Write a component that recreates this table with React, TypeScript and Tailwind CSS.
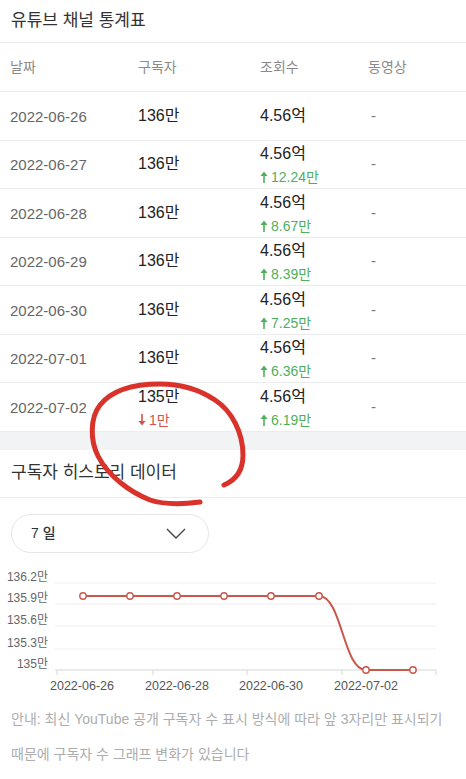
import React from 'react';

type Row = {
  date: string;
  subs: string;
  subsDelta?: string;
  views: string;
  viewsDelta?: string;
};

const rows: Row[] = [
  { date: '2022-06-26', subs: '136만', views: '4.56억' },
  { date: '2022-06-27', subs: '136만', views: '4.56억', viewsDelta: '12.24만' },
  { date: '2022-06-28', subs: '136만', views: '4.56억', viewsDelta: '8.67만' },
  { date: '2022-06-29', subs: '136만', views: '4.56억', viewsDelta: '8.39만' },
  { date: '2022-06-30', subs: '136만', views: '4.56억', viewsDelta: '7.25만' },
  { date: '2022-07-01', subs: '136만', views: '4.56억', viewsDelta: '6.36만' },
  { date: '2022-07-02', subs: '135만', subsDelta: '1만', views: '4.56억', viewsDelta: '6.19만' },
];

function Arrow({ up, color }: { up: boolean; color: string }) {
  return (
    <svg width="8" height="12" viewBox="0 0 8 12" className="mr-[3px]">
      {up ? (
        <>
          <polygon points="0.5,5 4,0.5 7.5,5" fill={color} />
          <rect x="3.2" y="4" width="1.6" height="8" fill={color} />
        </>
      ) : (
        <>
          <polygon points="0.5,7 4,11.5 7.5,7" fill={color} />
          <rect x="3.2" y="0" width="1.6" height="8" fill={color} />
        </>
      )}
    </svg>
  );
}

function Delta({ up, value }: { up: boolean; value: string }) {
  const color = up ? '#4fb05c' : '#d4544a';
  return (
    <div className={`flex items-center mt-[6px] text-[14px] leading-[14px] ${up ? 'text-[#4fb05c]' : 'text-[#d4544a]'}`}>
      <Arrow up={up} color={color} />
      {value}
    </div>
  );
}

const yLabels = [
  { t: '136.2만', y: 23 },
  { t: '135.9만', y: 44 },
  { t: '135.6만', y: 66 },
  { t: '135.3만', y: 89 },
  { t: '135만', y: 110 },
];

const points = [
  [83, 36], [130, 36], [177, 36], [224, 36], [271, 36], [319, 36], [366, 110], [413, 110],
];

function Chart() {
  const line = '#c9574b';
  return (
    <svg width="466" height="137" viewBox="0 0 466 137" className="block mt-[7px]">
      {yLabels.map((l, i) => (
        <g key={l.t}>
          <line x1="55" x2="436" y1={l.y} y2={l.y} stroke={i === 4 ? '#d6d6d6' : '#eeeeee'} strokeWidth="1" />
          <text x="48" y={l.y - 2.5} textAnchor="end" fontSize="12" fill="#666">
            {l.t}
          </text>
        </g>
      ))}
      {[57, 153, 247, 342, 436].map((x) => (
        <line key={x} x1={x} x2={x} y1="110" y2="115" stroke="#d6d6d6" strokeWidth="1" />
      ))}
      {[
        { t: '2022-06-26', x: 82 },
        { t: '2022-06-28', x: 177 },
        { t: '2022-06-30', x: 271 },
        { t: '2022-07-02', x: 366 },
      ].map((l) => (
        <text key={l.t} x={l.x} y="130" textAnchor="middle" fontSize="12.5" fill="#555">
          {l.t}
        </text>
      ))}
      <path
        d="M83 36 L319 36 C342 36 343 110 366 110 L413 110"
        fill="none"
        stroke={line}
        strokeWidth="2"
      />
      {points.map(([x, y]) => (
        <circle key={x} cx={x} cy={y} r="3.2" fill="#fff" stroke={line} strokeWidth="1.4" />
      ))}
    </svg>
  );
}

export default function App() {
  return (
    <div className="relative w-[466px] h-[779px] overflow-hidden bg-white font-[Liberation_Sans,Noto_Sans_CJK_KR,sans-serif]">
      {/* channel stats table */}
      <div className="h-[43px] flex items-center pl-[11px] border-b border-[#ececec] text-[17px] text-[#333]">
        유튜브 채널 통계표
      </div>
      <div className="h-[49px] grid grid-cols-[128px_122px_108px_1fr] items-center pl-[10px] border-b border-[#ececec] text-[14px] text-[#8a8a8a]">
        <div>날짜</div>
        <div>구독자</div>
        <div>조회수</div>
        <div>동영상</div>
      </div>
      {rows.map((r) => (
        <div
          key={r.date}
          className="h-[48.5px] grid grid-cols-[128px_122px_108px_1fr] items-center pl-[10px] border-b border-[#ececec]"
        >
          <div className="text-[15px] text-[#666] pt-[2px]">{r.date}</div>
          <div className="flex flex-col">
            <div className="text-[16px] leading-[20px] text-[#222]">{r.subs}</div>
            {r.subsDelta && <Delta up={false} value={r.subsDelta} />}
          </div>
          <div className="flex flex-col">
            <div className="text-[16px] leading-[20px] text-[#222]">{r.views}</div>
            {r.viewsDelta && <Delta up value={r.viewsDelta} />}
          </div>
          <div className="text-[15px] text-[#777] pl-[3px]">-</div>
        </div>
      ))}
      <div className="h-[18px] bg-[#f2f3f5]" />

      {/* subscriber history */}
      <div className="h-[48px] flex items-center pl-[11px] border-b border-[#ececec] text-[17px] text-[#333]">
        구독자 히스토리 데이터
      </div>
      <div className="px-[11px] pt-[16px]">
        <div className="w-[198px] h-[39px] rounded-full border border-[#e6e6e6] flex items-center justify-between pl-[19px] pr-[22px]">
          <span className="text-[14px] font-medium text-[#333]">7 일</span>
          <svg width="20" height="11" viewBox="0 0 20 11">
            <polyline points="1,1 10,10 19,1" fill="none" stroke="#444" strokeWidth="1.4" />
          </svg>
        </div>
      </div>
      <Chart />
      <div className="mt-[5px] pl-[11px] text-[14px] leading-[35px] text-[#adadad]">
        안내: 최신 YouTube 공개 구독자 수 표시 방식에 따라 앞 3자리만 표시되기
        <br />
        때문에 구독자 수 그래프 변화가 있습니다
      </div>

      {/* hand drawn red circle */}
      <svg
        width="466"
        height="779"
        viewBox="0 0 466 779"
        className="absolute inset-0 pointer-events-none"
      >
        <path
          d="M224 485 C236 480 243 470 243 455 C243 433 232 411 215 400 C200 390 180 384 160 384 C135 384 112 390 100 405 C90 418 90 440 98 456 C108 476 130 492 150 500 C165 505 185 504 200 502"
          fill="none"
          stroke="#d8322b"
          strokeWidth="5"
          strokeLinecap="round"
          strokeLinejoin="round"
        />
      </svg>
    </div>
  );
}
